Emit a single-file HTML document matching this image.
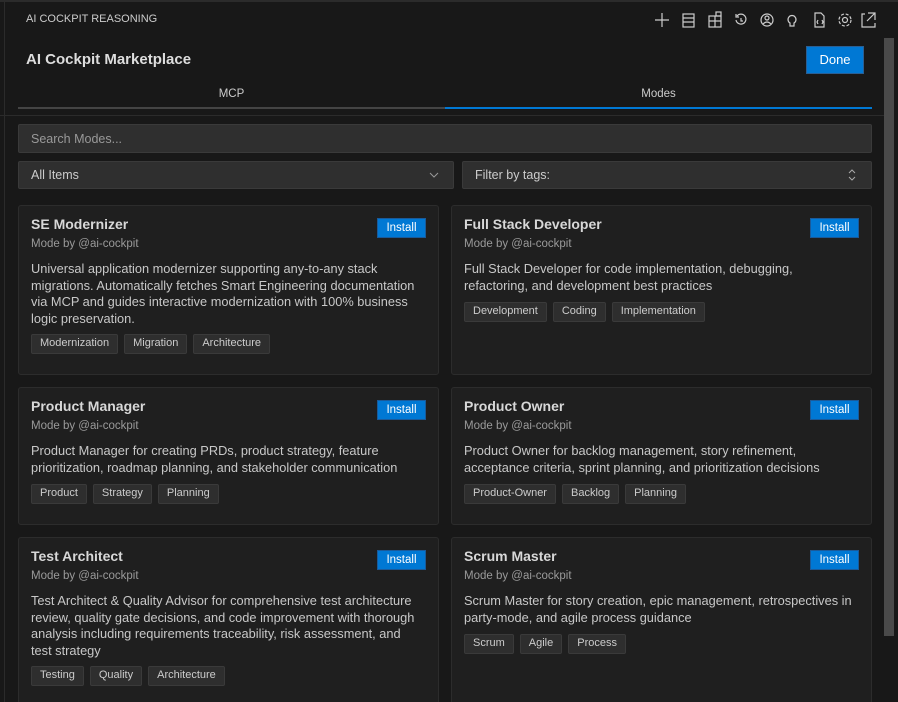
<!DOCTYPE html><html><head><style>
*{box-sizing:border-box;margin:0;padding:0}
html,body{width:898px;height:702px;overflow:hidden}
body{background:#181818;font-family:"Liberation Sans",sans-serif;color:#ccc;position:relative}
.abs{position:absolute}
.card{position:absolute;background:#1f1f1f;border:1px solid #2c2c2c;border-radius:3px}
.card h3{position:absolute;left:12px;top:10px;font-size:14px;font-weight:bold;color:#d8d8d8}
.card .by{position:absolute;left:12px;top:32px;font-size:11.5px;color:#9a9a9a}
.card .d{position:absolute;left:12px;top:55px;width:392px;font-size:12.8px;line-height:16.5px;color:#c8c8c8}
.inst{position:absolute;right:12px;top:12px;width:49px;height:20px;background:#0078d4;color:#fff;font-size:11.5px;text-align:center;line-height:19px;border:1px solid #1a5a9a}
.tags{position:absolute;left:12px;display:flex;gap:6px}
.tag{background:#2e2e2e;border:1px solid #3a3a3a;border-radius:2px;font-size:11px;padding:2px 8px;height:20px;color:#ccc}
</style></head><body>
<div class="abs" style="left:0;top:0;width:898px;height:2px;background:#2b2b2b"></div>
<div class="abs" style="left:4px;top:2px;width:1px;height:700px;background:#2b2b2b"></div>
<div class="abs" style="left:26px;top:13px;font-size:11px;color:#ccc">AI COCKPIT REASONING</div>
<svg class="abs" style="left:652px;top:10px" width="230" height="20" fill="none" stroke="#ccc" stroke-width="1.2">
<path d="M10 3v14M3 10h14"/>
<rect x="31" y="4" width="11" height="13"/><path d="M31 8h11M31 12h11"/>
<rect x="57" y="6" width="12" height="11"/><path d="M63 6v11M57 11h12"/><rect x="64" y="2" width="5" height="4"/>
<path d="M85 6a5 5 0 1 1-1 4M84 4v3h3M89 8v3h2"/>
<circle cx="115" cy="10" r="6"/><circle cx="115" cy="8" r="2"/><path d="M111 14q4-4 8 0"/>
<path d="M138 13a4 4 0 1 1 4 0v3h-4z"/>
<path d="M163 3h6l3 3v11h-9z M166 10l-1 2 1 2M170 10l1 2-1 2"/>
<circle cx="193" cy="10" r="2.5"/><circle cx="193" cy="10" r="6" stroke-dasharray="3 1.8"/>
<path d="M213 4h-3v13h13v-4M216 3h7v7M223 3l-8 8"/>
</svg>
<div class="abs" style="left:26px;top:51px;font-size:15px;font-weight:bold;color:#ddd">AI Cockpit Marketplace</div>
<div class="abs" style="left:806px;top:46px;width:58px;height:28px;background:#0078d4;border:1px solid #2a5f94;color:#fff;font-size:13px;text-align:center;line-height:26px">Done</div>
<div class="abs" style="left:18px;top:88px;width:427px;text-align:center;font-size:11.5px;color:#ccc">MCP</div>
<div class="abs" style="left:445px;top:88px;width:427px;text-align:center;font-size:11.5px;color:#ccc">Modes</div>
<div class="abs" style="left:18px;top:107px;width:427px;height:2px;background:#444"></div>
<div class="abs" style="left:445px;top:107px;width:427px;height:2px;background:#0078d4"></div>
<div class="abs" style="left:0;top:115px;width:884px;height:1px;background:#2b2b2b"></div>
<div class="abs" style="left:884px;top:38px;width:10px;height:598px;background:#4a4a4a"></div>
<div class="abs" style="left:18px;top:124px;width:854px;height:29px;background:#2f2f2f;border:1px solid #3a3a3a;border-radius:2px;font-size:12.5px;color:#999;padding:7px 12px">Search Modes...</div>
<div class="abs" style="left:18px;top:161px;width:436px;height:28px;background:#2f2f2f;border:1px solid #3a3a3a;border-radius:2px;font-size:12.5px;color:#ccc;padding:6px 12px">All Items<svg style="position:absolute;right:14px;top:9px" width="10" height="8" fill="none" stroke="#999"><path d="M1 2l4 4 4-4"/></svg></div>
<div class="abs" style="left:462px;top:161px;width:410px;height:28px;background:#2f2f2f;border:1px solid #3a3a3a;border-radius:2px;font-size:12.5px;color:#ccc;padding:6px 12px">Filter by tags:<svg style="position:absolute;right:14px;top:6px" width="10" height="14" fill="none" stroke="#aaa"><path d="M2 5l3-3 3 3M2 9l3 3 3-3"/></svg></div>

<div class="card" style="left:18px;top:205px;width:421px;height:170px"><h3>SE Modernizer</h3><div class="inst">Install</div><div class="by">Mode by @ai-cockpit</div><div class="d">Universal application modernizer supporting any-to-any stack migrations. Automatically fetches Smart Engineering documentation via MCP and guides interactive modernization with 100% business logic preservation.</div><div class="tags" style="top:128px"><span class="tag">Modernization</span><span class="tag">Migration</span><span class="tag">Architecture</span></div></div>
<div class="card" style="left:451px;top:205px;width:421px;height:170px"><h3>Full Stack Developer</h3><div class="inst">Install</div><div class="by">Mode by @ai-cockpit</div><div class="d">Full Stack Developer for code implementation, debugging, refactoring, and development best practices</div><div class="tags" style="top:96px"><span class="tag">Development</span><span class="tag">Coding</span><span class="tag">Implementation</span></div></div>
<div class="card" style="left:18px;top:387px;width:421px;height:138px"><h3>Product Manager</h3><div class="inst">Install</div><div class="by">Mode by @ai-cockpit</div><div class="d">Product Manager for creating PRDs, product strategy, feature prioritization, roadmap planning, and stakeholder communication</div><div class="tags" style="top:96px"><span class="tag">Product</span><span class="tag">Strategy</span><span class="tag">Planning</span></div></div>
<div class="card" style="left:451px;top:387px;width:421px;height:138px"><h3>Product Owner</h3><div class="inst">Install</div><div class="by">Mode by @ai-cockpit</div><div class="d">Product Owner for backlog management, story refinement, acceptance criteria, sprint planning, and prioritization decisions</div><div class="tags" style="top:96px"><span class="tag">Product-Owner</span><span class="tag">Backlog</span><span class="tag">Planning</span></div></div>
<div class="card" style="left:18px;top:537px;width:421px;height:180px"><h3>Test Architect</h3><div class="inst">Install</div><div class="by">Mode by @ai-cockpit</div><div class="d">Test Architect &amp; Quality Advisor for comprehensive test architecture review, quality gate decisions, and code improvement with thorough analysis including requirements traceability, risk assessment, and test strategy</div><div class="tags" style="top:128px"><span class="tag">Testing</span><span class="tag">Quality</span><span class="tag">Architecture</span></div></div>
<div class="card" style="left:451px;top:537px;width:421px;height:180px"><h3>Scrum Master</h3><div class="inst">Install</div><div class="by">Mode by @ai-cockpit</div><div class="d">Scrum Master for story creation, epic management, retrospectives in party-mode, and agile process guidance</div><div class="tags" style="top:96px"><span class="tag">Scrum</span><span class="tag">Agile</span><span class="tag">Process</span></div></div>
</body></html>
